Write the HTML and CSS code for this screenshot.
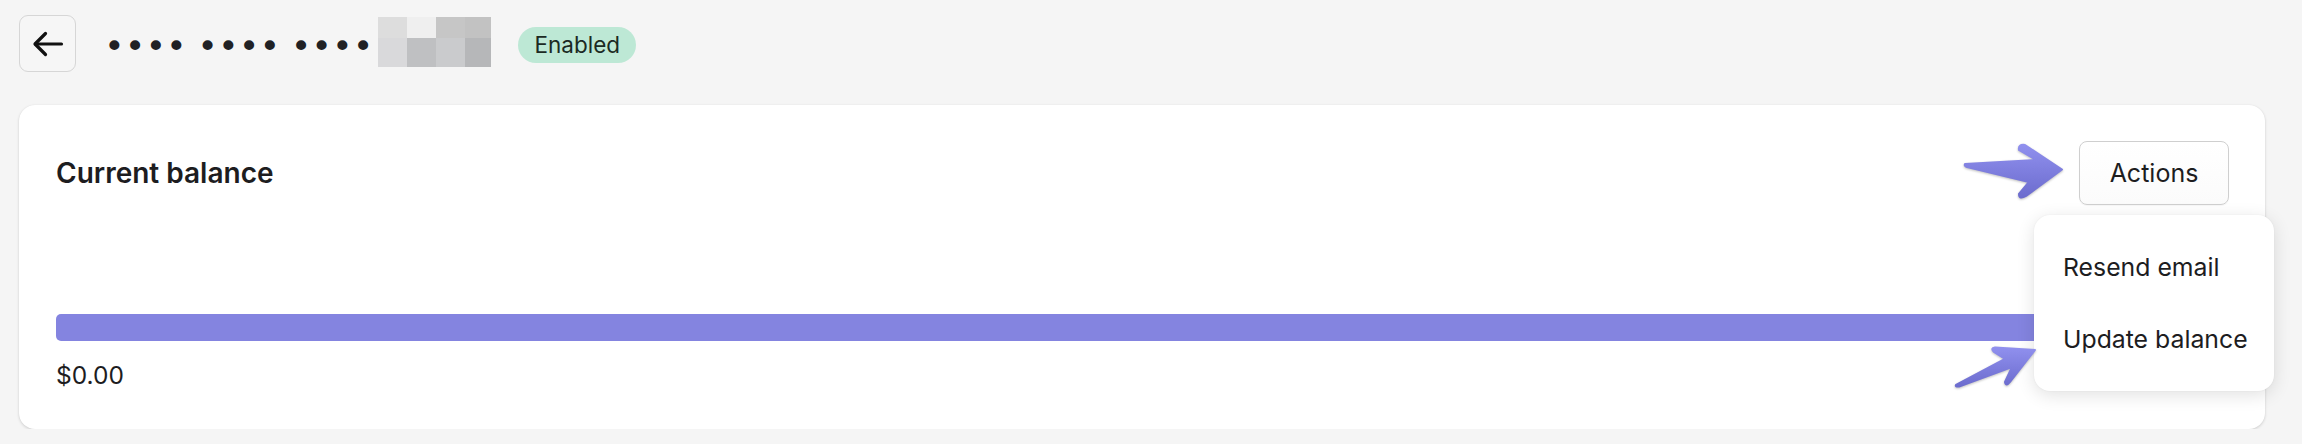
FILE: index.html
```html
<!DOCTYPE html>
<html lang="en">
<head>
<meta charset="utf-8">
<title>Card</title>
<link rel="stylesheet" href="styles.css">
</head>
<body>
<div class="page">
  <header class="topbar">
    <button class="back" aria-label="Back">
      <svg width="32" height="26" viewBox="0 0 32 26" fill="none" stroke="#111" stroke-width="3.2" stroke-linecap="round" stroke-linejoin="round">
        <path d="M29.5 13H3.5"/>
        <path d="M13.5 2.5L3 13L13.5 23.5"/>
      </svg>
    </button>
    <span class="masked"><span class="grp">••••</span><span class="grp">••••</span><span class="grp">••••</span></span>
    <span class="pixels" aria-hidden="true">
      <i class="px c1"></i><i class="px c2"></i><i class="px c3"></i><i class="px c4"></i>
      <i class="px c5"></i><i class="px c6"></i><i class="px c7"></i><i class="px c8"></i>
    </span>
    <span class="badge">Enabled</span>
  </header>

  <section class="card">
    <div class="card-head">
      <h2 class="title">Current balance</h2>
      <div class="actions">
        <button class="btn">Actions</button>
        <ul class="menu">
          <li class="menu-item">Resend email</li>
          <li class="menu-item">Update balance</li>
        </ul>
        <svg class="arrow arrow-1" width="110" height="65" viewBox="0 0 110 65">
          <defs>
            <linearGradient id="g1" x1="0" y1="0" x2="0" y2="1">
              <stop offset="0" stop-color="#9090ee"/>
              <stop offset="1" stop-color="#6c6cce"/>
            </linearGradient>
          </defs>
          <path d="M5 24 L76 20 L59 10 Q58 4 65 5 L102 29.5 L66 56 Q59 60 59 54 L69 42 L7 27 Q4 26 5 24 Z" fill="url(#g1)" stroke="url(#g1)" stroke-width="2" stroke-linejoin="round"/>
        </svg>
        <svg class="arrow arrow-2" width="90" height="55" viewBox="0 0 90 55">
          <defs>
            <linearGradient id="g2" x1="0" y1="0" x2="0" y2="1">
              <stop offset="0" stop-color="#9090ee"/>
              <stop offset="1" stop-color="#6c6cce"/>
            </linearGradient>
          </defs>
          <path d="M6 45 L55 19 L44 12 Q40 8 45 7.5 L85 10 L60 42 Q56 47 55 42 L62 27 L9 46.5 Q5 47 6 45 Z" fill="url(#g2)" stroke="url(#g2)" stroke-width="2" stroke-linejoin="round"/>
        </svg>
      </div>
    </div>
    <div class="bar"></div>
    <div class="amount">$0.00</div>
  </section>
</div>
</body>
</html>
```

FILE: styles.css
```css
* { box-sizing: border-box; }

html, body {
  margin: 0;
  padding: 0;
  background: #f5f5f5;
  font-family: Inter, "Noto Sans", "Liberation Sans", sans-serif;
  color: #1d1d1f;
}

.page {
  padding: 15px 37px 0 19px;
}

.topbar {
  display: flex;
  align-items: center;
  height: 57px;
}

.back {
  width: 57px;
  height: 57px;
  border: 1.5px solid #d6d6d6;
  border-radius: 9px;
  background: #f6f6f6;
  display: flex;
  align-items: center;
  justify-content: center;
  padding: 0;
  margin: 0 28px 0 0;
}

.masked {
  display: flex;
  font-family: "DejaVu Sans Mono", monospace;
  font-size: 34.4px;
  line-height: 57px;
  height: 57px;
  color: #202124;
  margin-top: 6px;
}

.grp { margin-right: 10.5px; }
.grp:last-child { margin-right: 0; }

.pixels {
  display: grid;
  grid-template-columns: 29px 29px 29px 26px;
  grid-template-rows: 21px 29px;
  margin-left: 5px;
  margin-top: -3px;
}

.px { display: block; }
.c1 { background: #dddddd; }
.c2 { background: #efefef; }
.c3 { background: #c6c6c6; }
.c4 { background: #c2c2c2; }
.c5 { background: #d9d9db; }
.c6 { background: #bfc0c2; }
.c7 { background: #cacbcd; }
.c8 { background: #b6b7b9; }

.badge {
  margin-left: 27px;
  height: 36px;
  padding: 0 16px;
  border-radius: 18px;
  background: #bde8d5;
  color: #1b2a23;
  font-size: 22.5px;
  line-height: 36px;
  margin-top: 3px;
}

.card {
  margin-top: 33px;
  background: #fff;
  border-radius: 16px;
  box-shadow: 0 1px 3px rgba(0, 0, 0, 0.16), 0 0 1px rgba(0, 0, 0, 0.06);
  padding: 36px 36px 36px 37px;
}

.card-head {
  display: flex;
  justify-content: space-between;
  align-items: center;
  height: 64px;
}

.title {
  margin: 0;
  font-size: 28px;
  font-weight: 600;
  color: #1d1d1f;
}

.actions {
  position: relative;
}

.btn {
  width: 150px;
  height: 64px;
  border: 1.5px solid #cfcfcf;
  border-radius: 8px;
  background: linear-gradient(#ffffff, #fbfbfb);
  box-shadow: 0 1px 1px rgba(0, 0, 0, 0.04);
  font-family: inherit;
  font-size: 25px;
  color: #1d1d1f;
  padding: 0;
}

.menu {
  position: absolute;
  left: -45px;
  top: 74px;
  width: 240px;
  margin: 0;
  padding: 16px 0;
  list-style: none;
  background: #fff;
  border-radius: 16px;
  box-shadow: 0 4px 18px rgba(0, 0, 0, 0.12), 0 0 2px rgba(0, 0, 0, 0.06);
  z-index: 2;
}

.menu-item {
  height: 72px;
  line-height: 72px;
  padding-left: 29px;
  font-size: 24.8px;
  color: #1d1d1f;
  white-space: nowrap;
}

.arrow {
  position: absolute;
  z-index: 3;
  filter: drop-shadow(0 1px 1px rgba(0, 0, 0, 0.25));
}

.arrow-1 { left: -119px; top: -1px; }
.arrow-2 { left: -129px; top: 199px; }

.bar {
  margin-top: 109px;
  height: 27px;
  border-radius: 5px;
  background: #8484e0;
}

.amount {
  margin-top: 16px;
  font-size: 24.5px;
  line-height: 36px;
  color: #1d1d1f;
}
```
